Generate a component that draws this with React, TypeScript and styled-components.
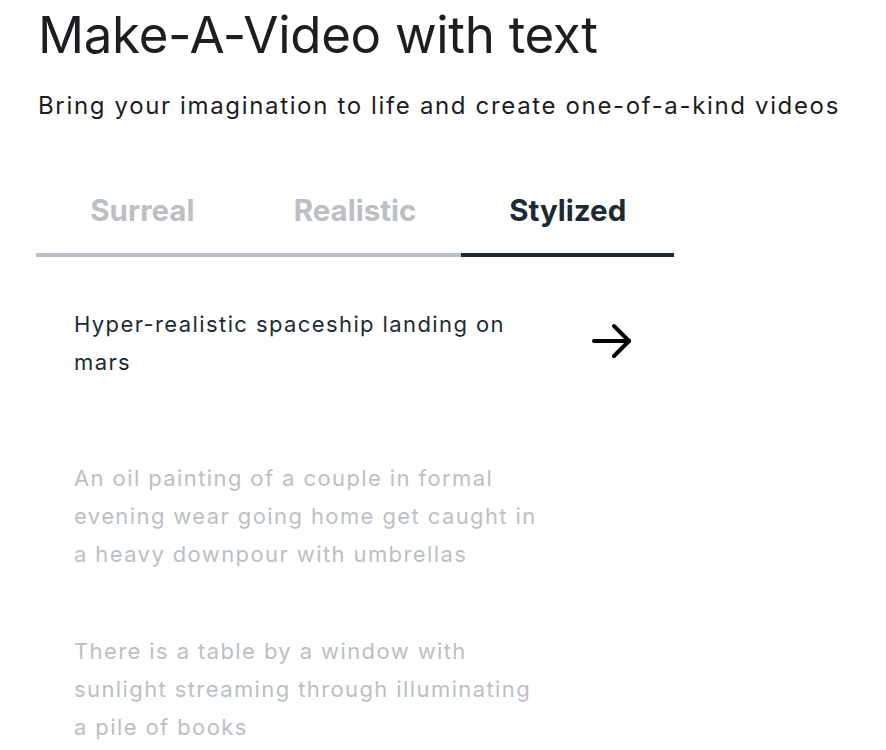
import React, { useState } from "react";
import styled, { createGlobalStyle } from "styled-components";

const Global = createGlobalStyle`
  html, body { margin: 0; padding: 0; background: #ffffff; }
  body { font-family: Inter, "Noto Sans", sans-serif; -webkit-font-smoothing: antialiased; }
`;

const Page = styled.main`
  padding: 3px 0 0 38px;
  width: 848px;
  box-sizing: border-box;
`;

const Title = styled.h1`
  margin: 0;
  font-size: 51px;
  font-weight: 400;
  line-height: 64px;
  color: #1c1e21;
  letter-spacing: -0.3px;
`;

const Subtitle = styled.p`
  margin: 21.5px 0 0;
  font-size: 24px;
  line-height: 34px;
  font-weight: 400;
  letter-spacing: 1.65px;
  color: #1c1e21;
  white-space: nowrap;
`;

const Tabs = styled.div`
  display: grid;
  grid-template-columns: repeat(3, 212.7px);
  margin: 59px 0 0 -2px;
`;

const Tab = styled.button<{ $active: boolean }>`
  all: unset;
  cursor: pointer;
  text-align: center;
  font-family: Inter, "Noto Sans", sans-serif;
  font-size: 29.5px;
  font-weight: 700;
  line-height: 36px;
  padding: 10px 0 25.3px;
  color: ${(p) => (p.$active ? "#1c2b33" : "#bcc0c4")};
  border-bottom: 4px solid ${(p) => (p.$active ? "#1c2b33" : "#bcc0c4")};
`;

const List = styled.ul`
  list-style: none;
  margin: 47.8px 0 0;
  padding: 0 0 0 36px;
`;

const Item = styled.li<{ $gap: number }>`
  display: flex;
  align-items: center;
  margin-bottom: ${(p) => p.$gap}px;
`;

const PromptText = styled.span<{ $active: boolean }>`
  width: 474px;
  flex: none;
  font-size: 22px;
  line-height: 38px;
  letter-spacing: 1.4px;
  color: ${(p) => (p.$active ? "#1c2b33" : "#bcc0c4")};
`;

const ArrowWrap = styled.span`
  display: flex;
  margin: 0 0 4px 43px;
  color: #000;
`;

const Arrow = () => (
  <svg width="42" height="36" viewBox="0 0 42 36" fill="none" stroke="currentColor" strokeWidth="4" strokeLinecap="round" strokeLinejoin="round">
    <path d="M3 18 H38" />
    <path d="M23 3 L38 18 L23 33" />
  </svg>
);

const prompts = [
  { text: "Hyper-realistic spaceship landing on mars", gap: 78 },
  { text: "An oil painting of a couple in formal evening wear going home get caught in a heavy downpour with umbrellas", gap: 59 },
  { text: "There is a table by a window with sunlight streaming through illuminating a pile of books", gap: 0 },
];

export default function App() {
  const [tab, setTab] = useState(2);
  const tabs = ["Surreal", "Realistic", "Stylized"];
  return (
    <>
      <Global />
      <Page>
        <Title>Make-A-Video with text</Title>
        <Subtitle>Bring your imagination to life and create one-of-a-kind videos</Subtitle>
        <Tabs>
          {tabs.map((t, i) => (
            <Tab key={t} $active={tab === i} onClick={() => setTab(i)}>
              {t}
            </Tab>
          ))}
        </Tabs>
        <List>
          {prompts.map((p, i) => (
            <Item key={i} $gap={p.gap}>
              <PromptText $active={i === 0}>{p.text}</PromptText>
              {i === 0 && (
                <ArrowWrap>
                  <Arrow />
                </ArrowWrap>
              )}
            </Item>
          ))}
        </List>
      </Page>
    </>
  );
}
